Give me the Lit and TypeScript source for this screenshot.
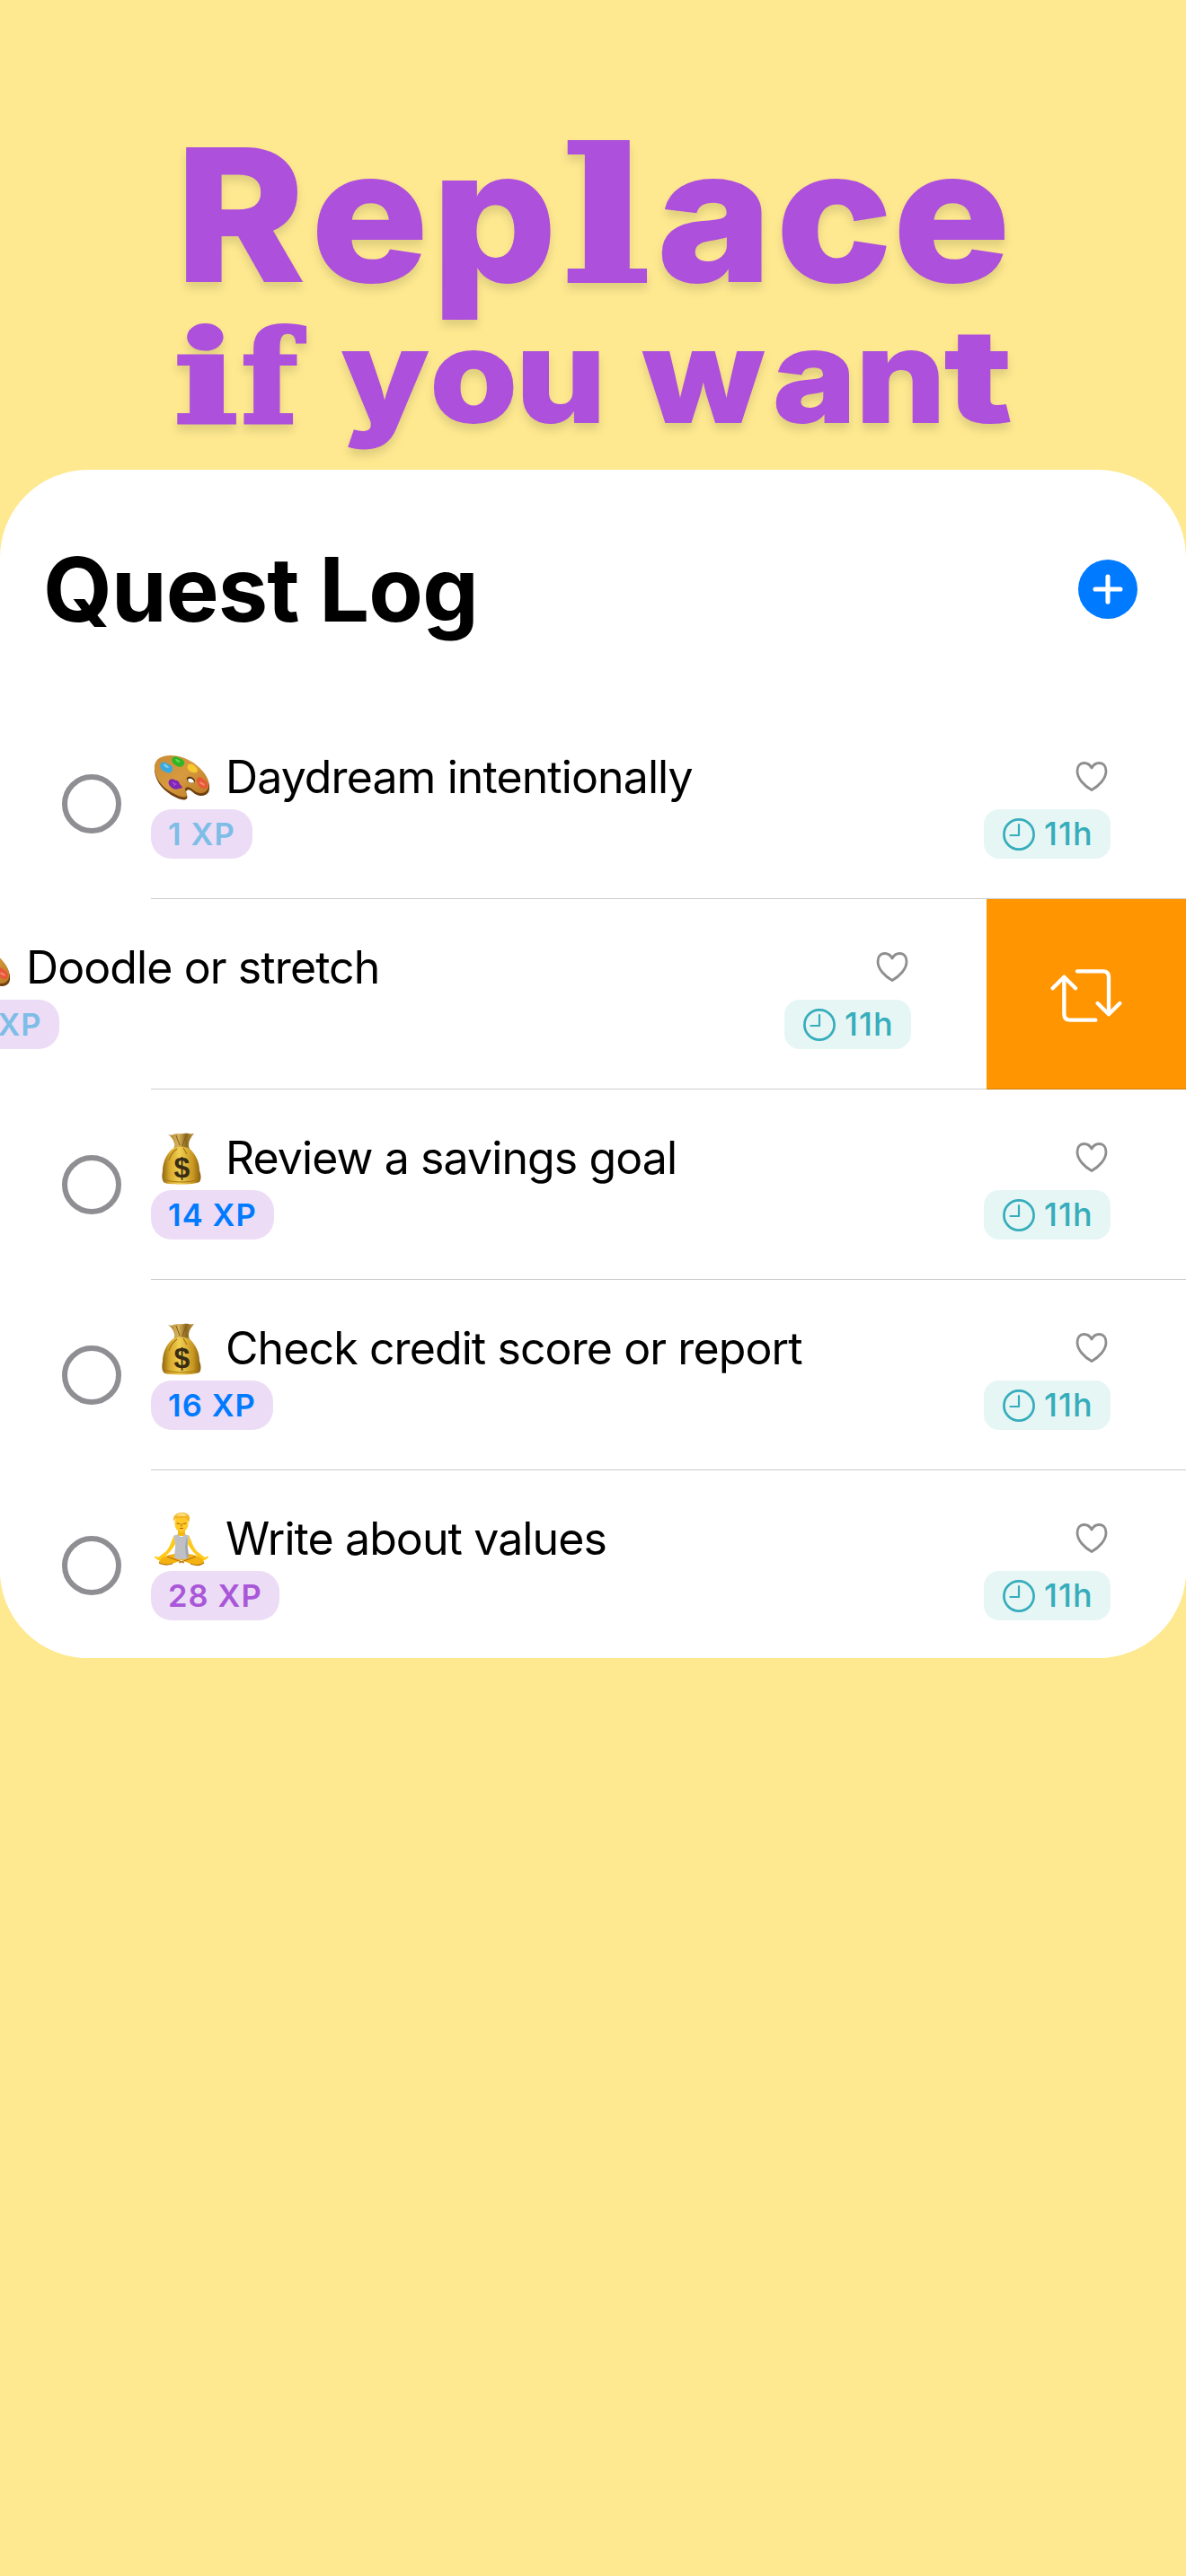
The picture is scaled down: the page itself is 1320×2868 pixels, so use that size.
import { LitElement, html, css, svg } from 'lit';
import { customElement, property } from 'lit/decorators.js';
import { classMap } from 'lit/directives/class-map.js';

type Quest = {
  icon: 'palette' | 'money' | 'yoga';
  title: string;
  xp: number;
  level: 'easy' | 'medium' | 'hard';
  left: string;
  swiped?: boolean;
};

const palette = svg`
  <svg viewBox="0 0 62 62">
    <defs>
      <linearGradient id="wood" x1="0" y1="0" x2="1" y2="1">
        <stop offset="0" stop-color="#c98b36" />
        <stop offset=".5" stop-color="#d79a3e" />
        <stop offset="1" stop-color="#b87722" />
      </linearGradient>
    </defs>
    <path fill="#70400f" d="M1 23C0 11 9 7 19 7c15 0 29 9 36 18 6 7 9 16 6 22-3 5-10 5-15 2-4-3-6-6-9-4-3 2 2 6 0 9-3 4-13-1-19-5C9 43 2 34 1 23z" />
    <path fill="url(#wood)" d="M1 21C0 10 9 6 19 6c15 0 29 9 36 18 6 7 8 15 5 20-3 5-9 5-14 2-4-3-7-6-10-4-3 2 2 6 1 9-3 4-13-1-19-5C9 41 2 32 1 21z" />
    <path fill="#50330e" d="M37 31c3-3 9 0 9 4l-2 2c-4 1-8-3-7-6z" />
    <path fill="#fff" d="M38 33c2-3 7 0 7 3-3 2-7 0-7-3z" />
    <path fill="#3ba9dc" d="M9 14c4-2 7 2 10 3 3 2 3 6 0 8-4 2-6-1-9-2-3-2-4-7-1-9z" />
    <path fill="#7fd0f0" d="M11 16c3-1 5 2 6 4-3 0-5-1-6-4z" />
    <path fill="#2fb526" d="M22 8c4-2 5 1 9 2 4 2 4 6 1 8-4 2-6 0-9-2-3-3-4-6-1-8z" />
    <path fill="#6bdc50" d="M24 10c3 0 4 2 6 3-2 2-5 0-6-3z" />
    <path fill="#f6c92e" d="M39 16c4-2 7 2 9 4 2 4 0 6-4 5-4 0-9-6-5-9z" />
    <path fill="#ea5638" d="M49 31c3-2 5 1 7 2 4 3 5 6 3 9-3 3-9-1-10-5-1-2-2-4 0-6z" />
    <path fill="#f58a70" d="M52 35l5 3-1 2-5-3z" />
    <path fill="#8125b5" d="M18 33c3-2 5 1 8 1 3 1 2 4 5 6 2 2 0 3-3 3-4 2-7 0-10-3-2-3-2-5 0-7z" />
    <path fill="#a44cd4" d="M20 35l6 3-3 2z" />
  </svg>
`;

const money = svg`
  <svg viewBox="0 0 62 62">
    <defs>
      <linearGradient id="sack" x1="0" x2="1">
        <stop offset="0" stop-color="#8d6510" />
        <stop offset=".2" stop-color="#d8aa2c" />
        <stop offset=".45" stop-color="#f0cf52" />
        <stop offset=".8" stop-color="#c99620" />
        <stop offset="1" stop-color="#86600f" />
      </linearGradient>
      <linearGradient id="neck" x1="0" x2="1">
        <stop offset="0" stop-color="#a98235" />
        <stop offset=".4" stop-color="#d9b35a" />
        <stop offset=".7" stop-color="#8d681c" />
        <stop offset="1" stop-color="#c09640" />
      </linearGradient>
    </defs>
    <path fill="url(#neck)" d="M16 4c4 2 7-1 11-1 4 1 9-1 12 0 2 1 4 0 6 0-3 4-6 7-6 13 0 2 1 4 2 6H21c1-2 3-5 2-8-1-4-3-7-7-10z" />
    <path fill="none" stroke="#7b5a17" stroke-width="1" d="M25 5l4 11M36 5l-4 12" />
    <path fill="url(#sack)" d="M21 20c5-3 14-3 19 0 6 5 11 14 11 24 2 6 2 10 0 13-5 3-36 4-40 0-2-3-2-8-1-12 0-11 5-20 11-25z" />
    <path fill="none" stroke="#a47516" stroke-width="1.2" d="M26 20c-4 3-8 8-9 13M33 19l4 7M12 54c8 4 30 4 38 0" />
    <text class="dollar" x="31" y="52" text-anchor="middle">$</text>
  </svg>
`;

const yoga = svg`
  <svg viewBox="0 0 62 62">
    <path fill="#f5b90d" d="M27 19h8v8h-8z" />
    <path fill="#ffc917" d="M23 26c-3 6-5 14-9 18l-9 7c-2-1-4-2-4 0l4 3c3 1 7-4 10-6 4-4 7-8 9-12zM39 26c3 6 5 14 9 18l9 7c2-1 4-2 4 0l-4 3c-3 1-7-4-10-6-4-4-7-8-9-12z" />
    <path fill="#f4b112" d="M15 49c5-3 27-3 32 0 4 1 10 5 9 8-3 3-10 3-15 1l-10-4-10 4c-5 2-12 2-15-1-1-3 5-7 9-8z" />
    <path fill="none" stroke="#b67408" stroke-width="1.2" d="M15 50l19 7M47 50l-19 7M6 57c5 3 11 2 15 1M41 58c5 2 11 2 15-1" />
    <path fill="#bfc0c4" d="M23 26c2 1 3-1 4-1 2 4 6 4 8 0 1 0 2 2 4 1 1 5-2 10-1 14l1 11c-4 3-12 3-16 0l1-11c1-4-2-9-1-14z" />
    <path fill="#a5a6ab" d="M37 28c-2 7-3 13 0 24l2-1-1-11z" />
    <ellipse cx="31" cy="13" rx="7.6" ry="10" fill="#ffca28" />
    <path fill="#f3b529" d="M22 11C21 4 26 1 32 1c7 0 10 5 7 11-1-3-3-4-4-5-4 1-8 0-11 1z" />
    <path fill="#ffdf7c" d="M25 5c3-4 8-4 12-1-3 2-8 0-12 1z" />
    <path fill="none" stroke="#a86200" stroke-width="1.1" stroke-linecap="round" d="M26 13l3 .5M33 13.500l3-.5M29.500 18.500h3M31 14v2" />
  </svg>
`;

const emojis = { palette, money, yoga };

@customElement('quest-row')
export class QuestRow extends LitElement {
  static styles = css`
    :host {
      display: block;
      position: relative;
      height: 212px;
      overflow: hidden;
      background: #fff;
    }
    /* separator starts at the text, and stays put while the row is swiped */
    :host::after {
      content: '';
      position: absolute;
      left: 168px;
      right: 0;
      bottom: 0;
      height: 1.5px;
      background: rgba(60, 60, 67, 0.26);
    }
    :host(:last-of-type)::after {
      display: none;
    }
    .track {
      display: flex;
      height: 100%;
    }
    .swiped {
      margin-left: -222px;
    }
    .content {
      display: grid;
      grid-template-columns: 168px 1fr 141px;
      flex: 0 0 1320px;
      box-sizing: border-box;
      padding-right: 84px;
    }
    .check {
      box-sizing: border-box;
      width: 66px;
      height: 66px;
      margin: 73px 0 0 69px;
      border: 6px solid #8e8e93;
      border-radius: 50%;
    }
    .info,
    .meta {
      display: flex;
      flex-direction: column;
      align-items: flex-start;
      gap: 4px;
      padding-top: 46px;
    }
    .info {
      gap: 5px;
      padding-top: 45px;
    }
    .meta {
      align-items: flex-end;
    }
    .title {
      display: flex;
      align-items: center;
      height: 62px;
      font-size: 50px;
      line-height: 62px;
      letter-spacing: -0.9px;
      white-space: nowrap;
      color: #000;
    }
    .emoji {
      width: 62px;
      height: 62px;
      margin: 2px 18px 0 3px;
    }
    .emoji svg {
      display: block;
    }
    .dollar {
      font: 700 32px 'Liberation Sans', sans-serif;
      fill: #3a2c14;
    }
    .xp {
      box-sizing: border-box;
      height: 55px;
      padding: 0 19px;
      border-radius: 23px;
      background: #ecdcf6;
      font-size: 34.5px;
      font-weight: 600;
      line-height: 55px;
      letter-spacing: 1.1px;
      white-space: nowrap;
    }
    .easy {
      color: #7dbde6;
    }
    .medium {
      color: #007aff;
    }
    .hard {
      color: #a957d8;
    }
    .heart {
      width: 36px;
      height: 62px;
      margin-right: 3px;
    }
    .time {
      display: flex;
      align-items: center;
      box-sizing: border-box;
      width: 141px;
      height: 55px;
      padding-left: 21px;
      gap: 10px;
      border-radius: 17px;
      background: #e6f6f5;
      color: #36adbc;
      font-size: 36px;
      font-weight: 500;
      line-height: 55px;
      letter-spacing: 1px;
    }
    .clock {
      width: 36px;
      height: 36px;
    }
    .action {
      display: flex;
      align-items: center;
      justify-content: center;
      flex: 0 0 222px;
      background: #ff9500;
    }
    .action svg {
      width: 80px;
      height: 61px;
      margin-top: 2px;
    }
  `;

  @property({ attribute: false }) quest!: Quest;

  render() {
    const { icon, title, xp, level, left, swiped } = this.quest;
    return html`
      <div class=${classMap({ track: true, swiped: !!swiped })}>
        <div class="content">
          <div class="check"></div>
          <div class="info">
            <div class="title"><span class="emoji">${emojis[icon]}</span>${title}</div>
            <div class="xp ${level}">${xp} XP</div>
          </div>
          <div class="meta">
            <svg class="heart" viewBox="0 0 36 62">
              <path
                d="M18 20c-2-4-5-5.500-8.500-5.500C5 14.500 2 18 2 23.500 2 32 10 40 18 44.500 26 40 34 32 34 23.500c0-5.500-3-9-7.500-9C23 14.500 20 16 18 20z"
                fill="none"
                stroke="#8e8e90"
                stroke-width="2.8"
                stroke-linejoin="round"
              />
            </svg>
            <div class="time">
              <svg class="clock" viewBox="0 0 36 36" fill="none" stroke="currentColor">
                <circle cx="18" cy="18" r="16.600" stroke-width="2.700" />
                <path d="M18 7v12H8.500" stroke-width="2.200" stroke-linecap="round" stroke-linejoin="round" />
              </svg>
              ${left}
            </div>
          </div>
        </div>
        ${swiped
          ? html`
              <div class="action">
                <svg viewBox="986 262 240 183" fill="none" stroke="#fff" stroke-width="13" stroke-linecap="round" stroke-linejoin="round">
                  <path d="M1076 272H1162Q1181 272 1181 291V415M1144 379L1181 416L1218 379" />
                  <path d="M1137 435H1053Q1032 435 1032 414V293M994 329L1032 291L1070 329" />
                </svg>
              </div>
            `
          : ''}
      </div>
    `;
  }
}

@customElement('app-root')
export class AppRoot extends LitElement {
  static styles = css`
    :host {
      display: block;
      height: 2868px;
      overflow: hidden;
      background: #fee990;
      font-family: Inter, 'Liberation Sans', sans-serif;
    }
    .headline {
      height: 523px;
      margin: 0;
    }
    .headline svg {
      display: block;
      filter: drop-shadow(0 7px 5px rgba(60, 70, 30, 0.16));
    }
    .headline text {
      font-family: Inter, sans-serif;
      font-weight: 800;
      fill: #ad50dc;
      stroke: #ad50dc;
      stroke-width: 2px;
    }
    .big {
      font-size: 204px;
    }
    .small {
      font-size: 143px;
    }
    .headline .slab {
      font-family: 'DejaVu Serif', serif;
      font-weight: 700;
      stroke-width: 4px;
    }
    .card {
      height: 1323px;
      overflow: hidden;
      border-radius: 98px;
      background: #fff;
    }
    .bar {
      display: flex;
      align-items: center;
      justify-content: space-between;
      height: 266px;
      box-sizing: border-box;
      padding: 0 54px 0 48px;
    }
    .bar h2 {
      margin: 0;
      font-size: 99px;
      font-weight: 700;
      line-height: 120px;
      letter-spacing: -0.9px;
    }
    .add {
      width: 66px;
      height: 66px;
    }
  `;

  quests: Quest[] = [
    { icon: 'palette', title: 'Daydream intentionally', xp: 1, level: 'easy', left: '11h' },
    { icon: 'palette', title: 'Doodle or stretch', xp: 2, level: 'easy', left: '11h', swiped: true },
    { icon: 'money', title: 'Review a savings goal', xp: 14, level: 'medium', left: '11h' },
    { icon: 'money', title: 'Check credit score or report', xp: 16, level: 'medium', left: '11h' },
    { icon: 'yoga', title: 'Write about values', xp: 28, level: 'hard', left: '11h' },
  ];

  render() {
    // i, f and l are slab letters, the rest of the headline is grotesque
    return html`
      <h1 class="headline">
        <svg width="1320" height="523" viewBox="0 0 1320 523">
          <text class="big" y="313" transform="scale(1.06 1)"><tspan x="185 327 454">Rep</tspan><tspan class="slab" x="590" textLength="93" lengthAdjust="spacingAndGlyphs">l</tspan><tspan x="690 815 938">ace</tspan></text>
          <text class="small" y="470" transform="scale(1.1 1)"><tspan class="slab" x="176" textLength="65" lengthAdjust="spacingAndGlyphs">i</tspan><tspan class="slab" x="244" textLength="57" lengthAdjust="spacingAndGlyphs">f</tspan> <tspan x="345.500 435 522">you</tspan> <tspan x="650 782 866">wan</tspan><tspan x="956" textLength="68" lengthAdjust="spacingAndGlyphs">t</tspan></text>
        </svg>
      </h1>
      <main class="card">
        <header class="bar">
          <h2>Quest Log</h2>
          <svg class="add" viewBox="0 0 66 66">
            <circle cx="33" cy="33" r="33" fill="#007aff" />
            <path d="M33 17.500v31M17.500 33h31" stroke="#fff" stroke-width="5.700" stroke-linecap="round" transform="translate(3.300 3.300) scale(.9)" />
          </svg>
        </header>
        ${this.quests.map((quest) => html`<quest-row .quest=${quest}></quest-row>`)}
      </main>
    `;
  }
}
